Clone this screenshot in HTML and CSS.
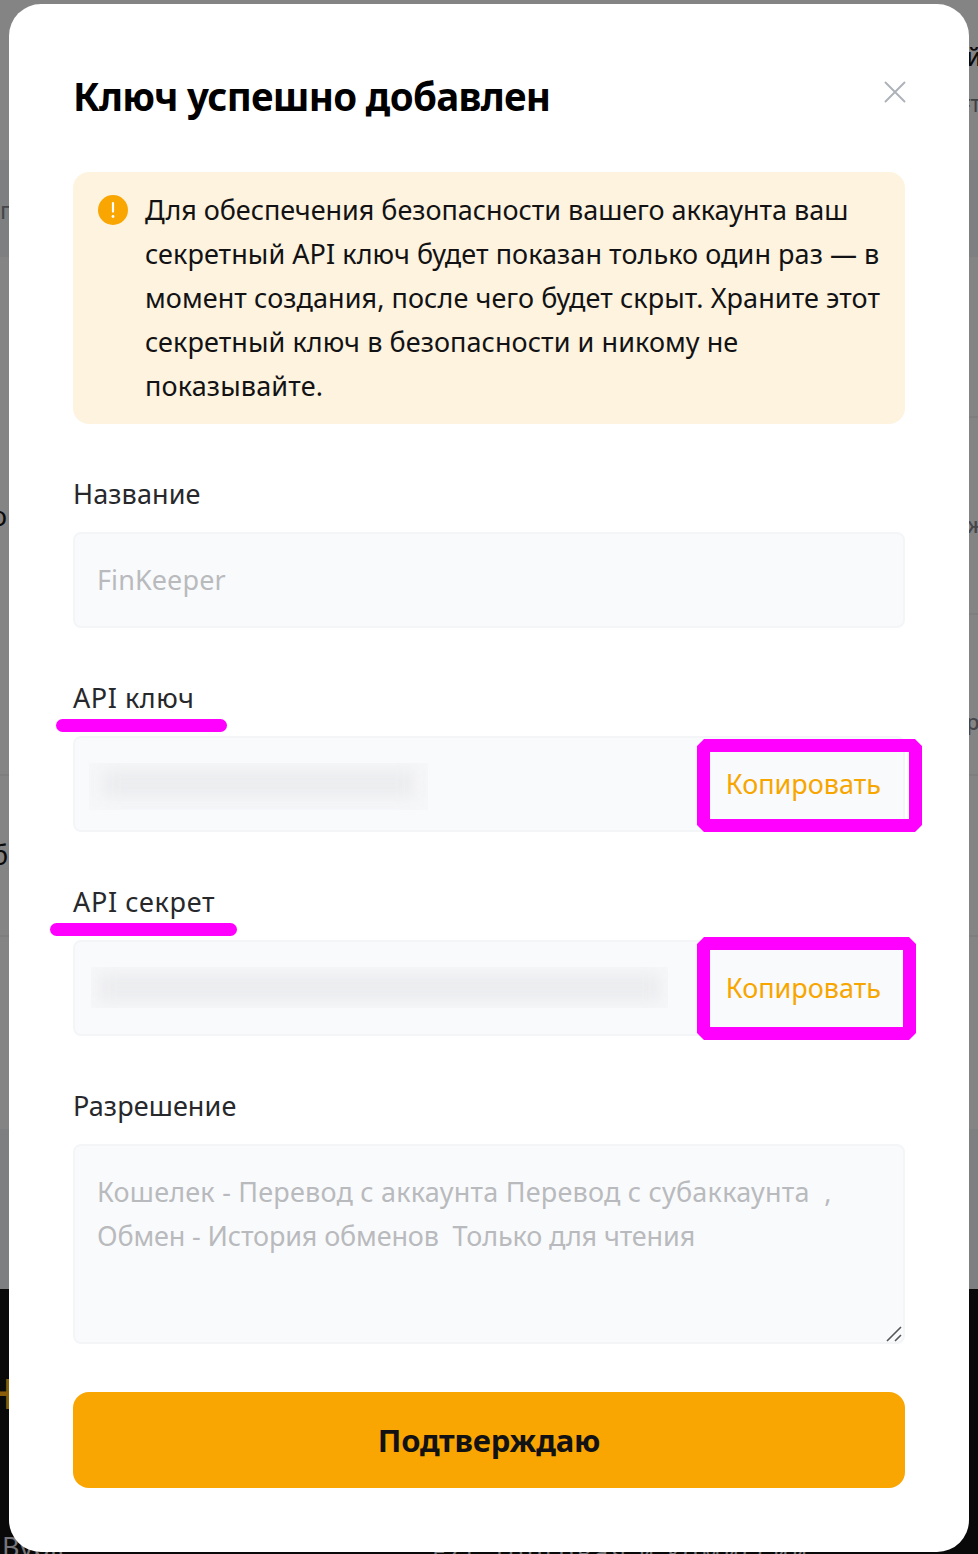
FILE: index.html
```
<!DOCTYPE html>
<html lang="ru">
<head>
<meta charset="utf-8">
<title>Ключ успешно добавлен</title>
<link rel="stylesheet" href="styles.css">
</head>
<body>
<div class="backdrop" aria-hidden="true">
  <div class="band band-top"></div>
  <div class="band band-low"></div>
  <div class="band band-footer"></div>
  <i class="rule rule-l1"></i><i class="rule rule-l2"></i>
  <i class="rule rule-r1"></i><i class="rule rule-r2"></i><i class="rule rule-r3"></i><i class="rule rule-r4"></i>
  <span class="bit bit-g">г</span>
  <span class="bit bit-o">о</span>
  <span class="bit bit-b">б</span>
  <span class="bit bit-i">й</span>
  <span class="bit bit-f">FT</span>
  <span class="bit bit-zh">ж</span>
  <span class="bit bit-r">р</span>
  <span class="bit bit-n">Н</span>
  <span class="bit bit-bybit">Bybit</span>
  <span class="bit bit-fee">FZE Торговая и комиссии</span>
</div>

<main class="dialog">
  <header class="head">
    <h1 class="title"><span class="t-title">Ключ успешно добавлен</span></h1>
    <svg class="close" viewBox="0 0 24 24"><path d="M2.5 2.5 21.5 21.5M21.5 2.5 2.5 21.5"/></svg>
  </header>

  <section class="alert">
    <svg class="alert-icon" viewBox="0 0 30 30"><circle cx="15" cy="15" r="15"/><path d="M15 8V16.6"/><circle class="dot" cx="15" cy="21.5" r="1.4"/></svg>
    <p class="alert-text">
      <span class="line a1">Для обеспечения безопасности вашего аккаунта ваш</span>
      <span class="line a2">секретный API ключ будет показан только один раз — в</span>
      <span class="line a3">момент создания, после чего будет скрыт. Храните этот</span>
      <span class="line a4">секретный ключ в безопасности и никому не</span>
      <span class="line a5">показывайте.</span>
    </p>
  </section>

  <section class="group">
    <div class="label"><span class="t-name">Название</span></div>
    <div class="field"><span class="muted t-fin">FinKeeper</span></div>
  </section>

  <section class="group">
    <div class="label"><span class="t-key">API ключ</span><i class="stroke stroke-key"></i></div>
    <div class="field">
      <div class="redacted redacted-key"><i></i></div>
      <span class="copy">Копировать</span>
      <svg class="frame frame-key" viewBox="0 0 225 93"><path fill-rule="evenodd" d="M7 0H218L225 7V86L218 93H7L0 86V7ZM13 13V80H212V13Z"/></svg>
    </div>
  </section>

  <section class="group">
    <div class="label"><span class="t-secret">API секрет</span><i class="stroke stroke-secret"></i></div>
    <div class="field">
      <div class="redacted redacted-secret"><i></i></div>
      <span class="copy">Копировать</span>
      <svg class="frame frame-secret" viewBox="0 0 219 103"><path fill-rule="evenodd" d="M7 0H212L219 7V96L212 103H7L0 96V7ZM13 13V90H206V13Z"/></svg>
    </div>
  </section>

  <section class="group">
    <div class="label"><span class="t-perm">Разрешение</span></div>
    <div class="field area muted">
      <span class="line p1">Кошелек - Перевод с аккаунта Перевод с субаккаунта&nbsp; ,</span>
      <span class="line p2">Обмен - История обменов&nbsp; Только для чтения</span>
      <svg class="grip" viewBox="0 0 16 16"><path d="M1 15 15 1M9 15 15 9"/></svg>
    </div>
  </section>

  <button class="confirm"><span class="t-confirm">Подтверждаю</span></button>
</main>
</body>
</html>
```
FILE: styles.css
```
* { box-sizing: border-box; }
body {
  margin: 0;
  width: 978px;
  height: 1554px;
  padding: 4px 9px 2px;
  overflow: hidden;
  background: #848484;
  font: 400 27px/44px "Noto Sans", "Open Sans", sans-serif;
  color: #121214;
  position: relative;
}
.backdrop { position: absolute; inset: 0; overflow: hidden; }
.band { position: absolute; left: 0; right: 0; }
.band-top { top: 160px; height: 97px; background: #7d7f81; }
.band-low { top: 1129px; height: 160px; background: #7d7f80; }
.band-footer { top: 1289px; bottom: 0; background: #09090a; }
.rule { position: absolute; width: 9px; height: 2px; background: #7e7e7e; }
.rule-l1 { left: 0; top: 774px; }
.rule-l2 { left: 0; top: 935px; }
.rule-r1 { right: 0; top: 416px; }
.rule-r2 { right: 0; top: 613px; }
.rule-r3 { right: 0; top: 774px; }
.rule-r4 { right: 0; top: 935px; }
.bit { position: absolute; line-height: 44px; white-space: nowrap; }
.bit-g { left: 0; top: 188px; color: #44464a; font-size: 24px; }
.bit-o { left: -9px; top: 494px; color: #0a0a0a; }
.bit-b { left: -8px; top: 833px; color: #0a0a0a; }
.bit-i { left: 966px; top: 34px; color: #0a0a0a; font-size: 25px; font-weight: 500; }
.bit-f { left: 961px; top: 83px; color: #3e4044; font-size: 18px; font-weight: 500; }
.bit-zh { left: 967px; top: 502px; color: #44464a; font-size: 22px; font-weight: 500; }
.bit-r { left: 966px; top: 699px; color: #44464a; font-size: 22px; font-weight: 500; }
.bit-n { left: -16px; top: 1371px; color: #8a5d0a; font-size: 41px; font-weight: 600; }
.bit-bybit { left: 2px; top: 1525px; color: #76767a; font-size: 27px; }
.bit-fee { left: 432px; top: 1529px; color: #76767a; font-size: 25px; letter-spacing: 3.2px; }

.dialog {
  position: relative;
  height: 1548px;
  padding: 64px;
  background: #fff;
  border-radius: 32px;
  display: flex;
  flex-direction: column;
  gap: 48px;
}
.head { display: flex; justify-content: space-between; height: 56px; }
.title { margin: 0; font-size: 38.5px; line-height: 57px; font-weight: 700; color: #000; white-space: nowrap; letter-spacing: -0.7px; }
.close { width: 24px; height: 24px; margin: 12px -2px 0 0; fill: none; stroke: #adb1b8; stroke-width: 1.9; stroke-linecap: round; }
.alert { display: flex; gap: 17px; height: 252px; padding: 16px 0 16px 25px; border-radius: 16px; background: #fdf3df; }
.alert-icon { width: 30px; height: 30px; margin-top: 7px; flex: none; fill: #f9a603; }
.alert-icon path { stroke: #fff; stroke-width: 2.2; stroke-linecap: round; }
.alert-icon .dot { fill: #fff; }
.alert-text { margin: 0; }
.line { display: block; white-space: nowrap; width: max-content; }
.a1 { letter-spacing: -0.04px; }
.a2 { letter-spacing: 0.06px; }
.a3 { letter-spacing: 0.07px; }
.a4 { letter-spacing: 0.07px; }
.a5 { letter-spacing: 0.15px; }
.t-name, .t-fin, .t-perm { letter-spacing: 0.1px; }
.t-key { letter-spacing: 0.55px; }
.t-secret { letter-spacing: 0.65px; }
.p1 { letter-spacing: 0.21px; }
.p2 { letter-spacing: -0.14px; }
.group { display: flex; flex-direction: column; gap: 16px; }
.label { position: relative; height: 44px; white-space: nowrap; color: #27282b; }
.field {
  position: relative;
  display: flex;
  align-items: center;
  justify-content: space-between;
  height: 96px;
  padding: 0 22px;
  border: 2px solid #f3f5f7;
  border-radius: 8px;
  background: #f9fafc;
}
.muted { color: #b9babd; }
.copy { margin-left: auto; color: #f7a600; }
.redacted { margin-left: -8px; background: #f6f7f9; overflow: hidden; display: flex; padding: 7px 14px 13px; }
.redacted i { flex: 1; background: #ebecee; filter: blur(8px); }
.redacted-key { width: 339px; height: 47px; margin-top: 4px; }
.redacted-secret { width: 577px; height: 41px; margin: -2px -20px 0 -6px; padding: 7px 8px; }
.stroke { position: absolute; height: 14px; border-radius: 7px; background: #ff00ff; }
.stroke-key { left: -17.5px; top: 42.7px; width: 171px; height: 13.5px; }
.stroke-secret { left: -23.5px; top: 42.7px; width: 187px; height: 13.5px; }
.frame { position: absolute; left: 622px; fill: #ff00ff; z-index: 1; }
.frame-key { top: 1px; width: 225px; height: 93px; }
.frame-secret { top: -5px; width: 219px; height: 103px; }
.area { display: block; height: 200px; padding-top: 24px; }
.grip { position: absolute; right: 1px; bottom: 0; width: 16px; height: 16px; fill: none; stroke: #55565a; stroke-width: 1.6; }
.confirm { height: 96px; flex: none; border: 0; border-radius: 16px; background: #f9a603; color: #121214; font: 700 31px/44px "Noto Sans", "Open Sans", sans-serif; letter-spacing: -0.2px; }
```
